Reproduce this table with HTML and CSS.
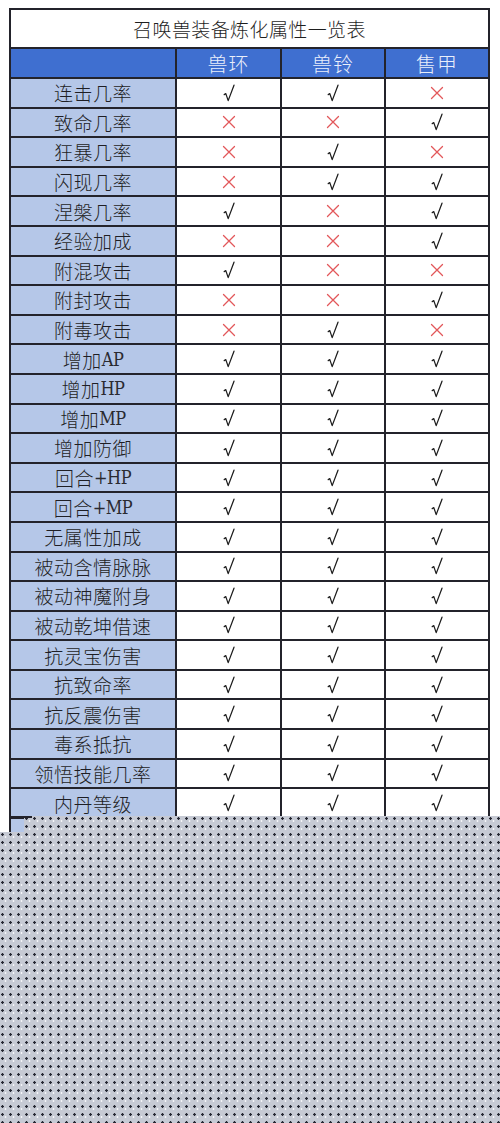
FILE: index.html
```html
<!DOCTYPE html>
<html lang="zh">
<head>
<meta charset="utf-8">
<title>召唤兽装备炼化属性一览表</title>
<link rel="stylesheet" href="styles.css">
</head>
<body>
<svg class="defs" width="0" height="0" aria-hidden="true">
  <symbol id="ck" viewBox="0 0 12 18">
    <path d="M1.2 10.6 L2.8 9.6 L5.2 16.6 L11 1.2" fill="none" stroke="#1c1c1c" stroke-width="1.25" stroke-linejoin="round" stroke-linecap="round"/>
  </symbol>
  <symbol id="cx" viewBox="0 0 14 14">
    <path d="M1.5 1.5 L12.5 12.5 M12.5 1.5 L1.5 12.5" fill="none" stroke="#e2575a" stroke-width="1.3" stroke-linecap="round"/>
  </symbol>
</svg>
<div class="page">
  <div class="sheet">
    <div class="title">召唤兽装备炼化属性一览表</div>
    <div class="hd"></div><div class="hd">兽环</div><div class="hd">兽铃</div><div class="hd">售甲</div>

    <div class="lb">连击几率</div><div class="c"><svg class="y"><use href="#ck"/></svg></div><div class="c"><svg class="y"><use href="#ck"/></svg></div><div class="c"><svg class="n"><use href="#cx"/></svg></div>
    <div class="lb">致命几率</div><div class="c"><svg class="n"><use href="#cx"/></svg></div><div class="c"><svg class="n"><use href="#cx"/></svg></div><div class="c"><svg class="y"><use href="#ck"/></svg></div>
    <div class="lb">狂暴几率</div><div class="c"><svg class="n"><use href="#cx"/></svg></div><div class="c"><svg class="y"><use href="#ck"/></svg></div><div class="c"><svg class="n"><use href="#cx"/></svg></div>
    <div class="lb">闪现几率</div><div class="c"><svg class="n"><use href="#cx"/></svg></div><div class="c"><svg class="y"><use href="#ck"/></svg></div><div class="c"><svg class="y"><use href="#ck"/></svg></div>
    <div class="lb">涅槃几率</div><div class="c"><svg class="y"><use href="#ck"/></svg></div><div class="c"><svg class="n"><use href="#cx"/></svg></div><div class="c"><svg class="y"><use href="#ck"/></svg></div>
    <div class="lb">经验加成</div><div class="c"><svg class="n"><use href="#cx"/></svg></div><div class="c"><svg class="n"><use href="#cx"/></svg></div><div class="c"><svg class="y"><use href="#ck"/></svg></div>
    <div class="lb">附混攻击</div><div class="c"><svg class="y"><use href="#ck"/></svg></div><div class="c"><svg class="n"><use href="#cx"/></svg></div><div class="c"><svg class="n"><use href="#cx"/></svg></div>
    <div class="lb">附封攻击</div><div class="c"><svg class="n"><use href="#cx"/></svg></div><div class="c"><svg class="n"><use href="#cx"/></svg></div><div class="c"><svg class="y"><use href="#ck"/></svg></div>
    <div class="lb">附毒攻击</div><div class="c"><svg class="n"><use href="#cx"/></svg></div><div class="c"><svg class="y"><use href="#ck"/></svg></div><div class="c"><svg class="n"><use href="#cx"/></svg></div>
    <div class="lb">增加<span class="la">AP</span></div><div class="c"><svg class="y"><use href="#ck"/></svg></div><div class="c"><svg class="y"><use href="#ck"/></svg></div><div class="c"><svg class="y"><use href="#ck"/></svg></div>
    <div class="lb">增加<span class="la">HP</span></div><div class="c"><svg class="y"><use href="#ck"/></svg></div><div class="c"><svg class="y"><use href="#ck"/></svg></div><div class="c"><svg class="y"><use href="#ck"/></svg></div>
    <div class="lb">增加<span class="la">MP</span></div><div class="c"><svg class="y"><use href="#ck"/></svg></div><div class="c"><svg class="y"><use href="#ck"/></svg></div><div class="c"><svg class="y"><use href="#ck"/></svg></div>
    <div class="lb">增加防御</div><div class="c"><svg class="y"><use href="#ck"/></svg></div><div class="c"><svg class="y"><use href="#ck"/></svg></div><div class="c"><svg class="y"><use href="#ck"/></svg></div>
    <div class="lb">回合<span class="la">+HP</span></div><div class="c"><svg class="y"><use href="#ck"/></svg></div><div class="c"><svg class="y"><use href="#ck"/></svg></div><div class="c"><svg class="y"><use href="#ck"/></svg></div>
    <div class="lb">回合<span class="la">+MP</span></div><div class="c"><svg class="y"><use href="#ck"/></svg></div><div class="c"><svg class="y"><use href="#ck"/></svg></div><div class="c"><svg class="y"><use href="#ck"/></svg></div>
    <div class="lb">无属性加成</div><div class="c"><svg class="y"><use href="#ck"/></svg></div><div class="c"><svg class="y"><use href="#ck"/></svg></div><div class="c"><svg class="y"><use href="#ck"/></svg></div>
    <div class="lb">被动含情脉脉</div><div class="c"><svg class="y"><use href="#ck"/></svg></div><div class="c"><svg class="y"><use href="#ck"/></svg></div><div class="c"><svg class="y"><use href="#ck"/></svg></div>
    <div class="lb">被动神魔附身</div><div class="c"><svg class="y"><use href="#ck"/></svg></div><div class="c"><svg class="y"><use href="#ck"/></svg></div><div class="c"><svg class="y"><use href="#ck"/></svg></div>
    <div class="lb">被动乾坤借速</div><div class="c"><svg class="y"><use href="#ck"/></svg></div><div class="c"><svg class="y"><use href="#ck"/></svg></div><div class="c"><svg class="y"><use href="#ck"/></svg></div>
    <div class="lb">抗灵宝伤害</div><div class="c"><svg class="y"><use href="#ck"/></svg></div><div class="c"><svg class="y"><use href="#ck"/></svg></div><div class="c"><svg class="y"><use href="#ck"/></svg></div>
    <div class="lb">抗致命率</div><div class="c"><svg class="y"><use href="#ck"/></svg></div><div class="c"><svg class="y"><use href="#ck"/></svg></div><div class="c"><svg class="y"><use href="#ck"/></svg></div>
    <div class="lb">抗反震伤害</div><div class="c"><svg class="y"><use href="#ck"/></svg></div><div class="c"><svg class="y"><use href="#ck"/></svg></div><div class="c"><svg class="y"><use href="#ck"/></svg></div>
    <div class="lb">毒系抵抗</div><div class="c"><svg class="y"><use href="#ck"/></svg></div><div class="c"><svg class="y"><use href="#ck"/></svg></div><div class="c"><svg class="y"><use href="#ck"/></svg></div>
    <div class="lb">领悟技能几率</div><div class="c"><svg class="y"><use href="#ck"/></svg></div><div class="c"><svg class="y"><use href="#ck"/></svg></div><div class="c"><svg class="y"><use href="#ck"/></svg></div>
    <div class="lb">内丹等级</div><div class="c"><svg class="y"><use href="#ck"/></svg></div><div class="c"><svg class="y"><use href="#ck"/></svg></div><div class="c"><svg class="y"><use href="#ck"/></svg></div>
    <div class="lb"></div><div class="c"></div><div class="c"></div><div class="c"></div>
  </div>
  <div class="mask"></div>
  <div class="stub"></div>
</div>
</body>
</html>
```
FILE: styles.css
```css
html, body {
  margin: 0;
  padding: 0;
  background: #ffffff;
  overflow: hidden;
}
.defs {
  position: absolute;
  width: 0;
  height: 0;
}
.page {
  position: relative;
  width: 500px;
  height: 1123px;
  overflow: hidden;
  padding: 8px 0 0 9px;
  box-sizing: border-box;
  font-family: "Liberation Serif", "Noto Sans CJK SC", serif;
  color: #222;
}
.sheet {
  width: 481px;
  box-sizing: border-box;
  display: grid;
  grid-template-columns: 164px 103px 102px 102px;
  grid-template-rows: 37px 28px;
  grid-auto-rows: 27.6px;
  gap: 2px;
  padding: 2px;
  background: #23232b;
}
.title {
  grid-column: 1 / span 4;
  background: #fff;
  display: flex;
  align-items: center;
  justify-content: center;
  font-size: 19px;
  font-weight: 300;
  letter-spacing: 0.4px;
  color: #1e1e1e;
}
.hd {
  background: #3f6fd0;
  color: #e9eefb;
  display: flex;
  align-items: center;
  justify-content: center;
  font-size: 20px;
  font-weight: 300;
  letter-spacing: 1px;
}
.lb {
  background: #b5c7e8;
  display: flex;
  align-items: center;
  justify-content: center;
  font-size: 19px;
  font-weight: 300;
  color: #1e1e24;
  letter-spacing: 0.5px;
}
.la {
  font-family: "DejaVu Serif", "Liberation Serif", serif;
  font-stretch: condensed;
  font-weight: 300;
  font-size: 18px;
  letter-spacing: -0.5px;
  color: #2a2a30;
}
.c {
  background: #fff;
  display: flex;
  align-items: center;
  justify-content: center;
}
.y {
  width: 12px;
  height: 18px;
}
.n {
  width: 14px;
  height: 14px;
}
.mask {
  position: absolute;
  left: 0;
  right: 0;
  top: 816px;
  bottom: 0;
  background-color: #c6cad4;
  background-image:
    radial-gradient(circle at 2.5px 2.5px, #262833 1px, transparent 1.5px),
    radial-gradient(circle at 5.5px 5px, #f4f5f8 0.8px, transparent 1.2px);
  background-size: 8px 8px;
  clip-path: polygon(24px 0, 100% 0, 100% 100%, 0 100%, 0 16px, 24px 16px);
}
.stub {
  position: absolute;
  left: 11px;
  top: 816px;
  width: 21px;
  height: 2px;
  background: #23232b;
}
```
